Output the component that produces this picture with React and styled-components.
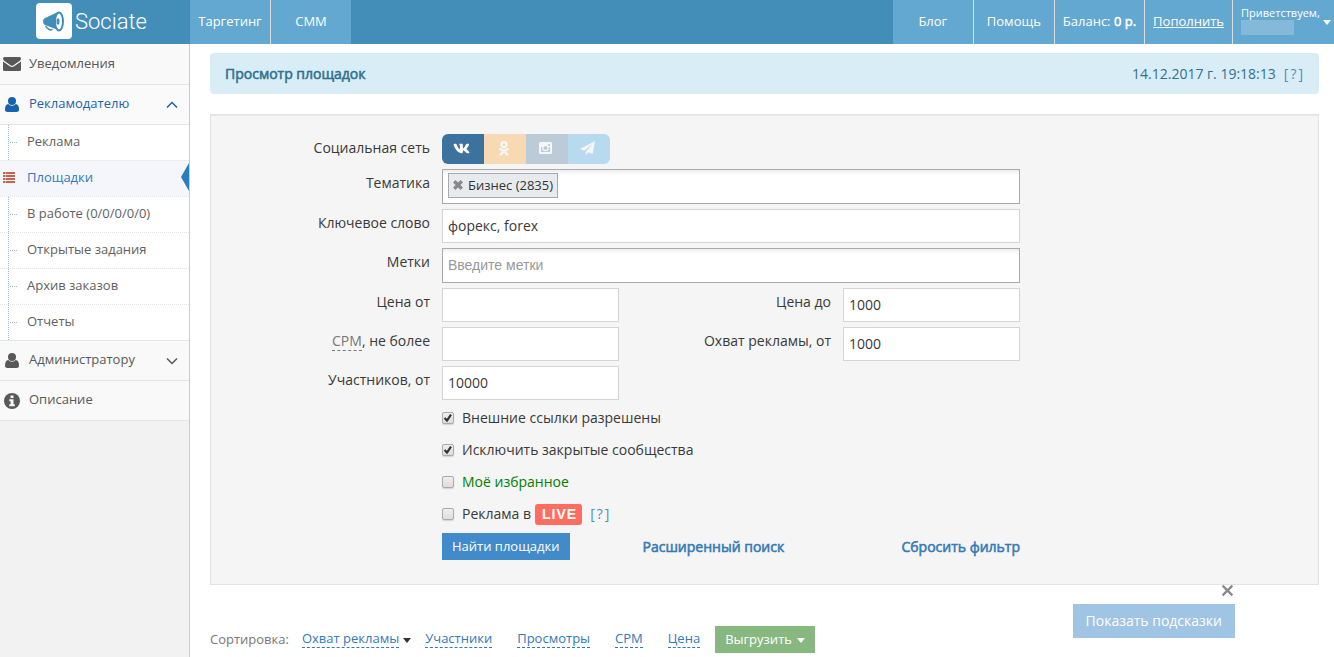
import React from 'react';

import styled, { createGlobalStyle, css } from 'styled-components';

import { FaVk } from 'react-icons/fa';

const GlobalStyle = createGlobalStyle`
	* {
		box-sizing: border-box;
	}
	html {
		height: 100%;
		overflow: hidden;
	}
	body, #root {
		height: 100%;
		margin: 0;
	}
	body {
		font-family: 'Open Sans', 'Noto Sans', sans-serif;
		font-size: 13px;
		line-height: 20px;
		color: #393939;
		background: #fff;
	}
	input, button {
		font-family: inherit;
	}
	a {
		color: #337ab7;
		text-decoration: none;
	}
`;

// thickened regular weight, keeps the regular widths
const strong = css`
	font-weight: 400;
	-webkit-text-stroke: 0.04em currentColor;
`;

const Page = styled.div`
	display: flex;
	flex-direction: column;
	min-height: 100%;
`;

const Navbar = styled.header`
	display: flex;
	height: 44px;
	background: #438eb9;
`;

const Brand = styled.a`
	display: flex;
	align-items: center;
	gap: 3px;
	width: 190px;
	padding: 0 0 3px 36px;
	color: #fff;
	font-family: Roboto, 'Open Sans', sans-serif;
	font-size: 22px;
	font-weight: 300;
`;

const BrandName = styled.span`
	padding-top: 3px;
`;

const NavGroup = styled.nav`
	display: flex;
	margin-left: ${(props) => (props.$right ? 'auto' : 0)};
`;

const NavLink = styled.a`
	display: flex;
	align-items: center;
	justify-content: center;
	min-width: 80px;
	padding: 0 8px 2px;
	color: #fff;
	background: #62a8d1;
	white-space: pre;
	text-decoration: ${(props) => (props.$underline ? 'underline' : 'none')};
	& + & {
		min-width: 81px;
		border-left: 1px solid #ddd;
	}
`;

const Balance = styled.b`
	${strong}
`;

const UserButton = styled.button`
	display: flex;
	align-items: center;
	gap: 3px;
	width: 102px;
	padding: 0 3px 3px 8px;
	border: 0;
	border-left: 1px solid #ddd;
	color: #fff;
	background: #62a8d1;
	font-size: 11px;
	line-height: 14px;
	text-align: left;
`;

const UserName = styled.span`
	display: block;
	width: 53px;
	height: 15px;
	background: #85b9da;
`;

const Caret = styled.span`
	flex: none;
	display: inline-block;
	margin-top: 3px;
	border: 4px solid transparent;
	border-top: 5px solid ${(props) => props.$color || '#fff'};
	border-bottom: 0;
`;

const Body = styled.div`
	display: flex;
	flex: 1;
`;

const Sidebar = styled.aside`
	flex: none;
	width: 190px;
	border-right: 1px solid #ccc;
	background: #f2f2f2;
`;

const Menu = styled.ul`
	margin: 0;
	padding: 0;
	list-style: none;
`;

const MenuItem = styled.li`
	border-bottom: 1px solid #e5e5e5;
`;

const MenuLink = styled.a`
	display: flex;
	align-items: center;
	height: ${(props) => (props.$first ? 40 : 39)}px;
	padding: 0 11px 0 3px;
	color: ${(props) => (props.$open ? '#1963aa' : '#585858')};
	background: ${(props) => (props.$open ? '#fafafa' : '#f9f9f9')};
`;

const MenuIcon = styled.span`
	display: flex;
	flex: none;
	justify-content: center;
	width: 18px;
	height: 16px;
	margin-right: 8px;
	align-items: center;
`;

const MenuText = styled.span`
	flex: 1;
	padding-bottom: 3px;
`;

const Submenu = styled.ul`
	position: relative;
	margin: 0;
	padding: 0;
	list-style: none;
	border-top: 1px solid #e5e5e5;
	background: #fff;
	&::before {
		content: '';
		position: absolute;
		top: 0;
		bottom: 0;
		left: 8px;
		border-left: 1px dotted #9dbdd6;
	}
`;

const SubLink = styled.a`
	position: relative;
	display: flex;
	align-items: center;
	height: ${(props) => (props.$first ? 35 : 36)}px;
	padding: 0 0 3px 27px;
	border-top: ${(props) => (props.$first ? '0' : '1px dotted #e4e4e4')};
	color: ${(props) => (props.$active ? '#337ab7' : '#616161')};
	background: ${(props) => (props.$active ? '#f4f6fb' : 'transparent')};
	${(props) => !props.$active && css`
		&::before {
			content: '';
			position: absolute;
			top: 17px;
			left: 10px;
			width: 7px;
			border-top: 1px dotted #9dbdd6;
		}
	`}
	${(props) => props.$active && css`
		&::after {
			content: '';
			position: absolute;
			top: 2px;
			right: 0;
			border: 14px solid transparent;
			border-right: 8px solid #2b7dbc;
			border-left: 0;
		}
	`}
`;

const ListMark = styled.svg`
	position: absolute;
	top: 11px;
	left: 3px;
	z-index: 1;
`;

const Content = styled.main`
	flex: 1;
	min-width: 0;
	padding: 9px 15px 0 20px;
`;

const TitleBar = styled.div`
	display: flex;
	align-items: center;
	justify-content: space-between;
	height: 41px;
	padding: 0 14px 0 15px;
	border-radius: 4px;
	color: #31708f;
	background: #d9edf7;
	font-size: 14px;
`;

const Title = styled.h1`
	margin: 0;
	font-size: 14px;
	${strong}
`;

const Help = styled.a`
	margin-left: 8px;
	color: #4c8fbd;
	letter-spacing: 2px;
`;

const Filter = styled.form`
	margin-top: 20px;
	padding: 19px 20px 24px;
	border: 1px solid #e3e3e3;
	background: #f5f5f5;
	box-shadow: inset 0 1px 1px rgba(0, 0, 0, 0.05);
	font-size: 14px;
`;

const Fields = styled.div`
	display: grid;
	grid-template-columns: 199px 177px 200px 177px;
	column-gap: 12px;
	row-gap: 5px;
`;

const Label = styled.label`
	padding-top: 4px;
	text-align: right;
`;

const Wide = styled.div`
	grid-column: 2 / -1;
`;

const Networks = styled.div`
	display: flex;
	width: 168px;
	height: 30px;
	border-radius: 6px;
	overflow: hidden;
`;

const NetworkButton = styled.button`
	display: flex;
	flex: 1;
	align-items: center;
	justify-content: center;
	padding: 0 3px 2px 0;
	border: 0;
	color: ${(props) => (props.$active ? '#fff' : '#f6f6f6')};
	background: ${(props) => props.$color};
`;

const Input = styled.input`
	display: block;
	width: 100%;
	height: 34px;
	padding: 0 5px 2px;
	border: 1px solid #d5d5d5;
	border-radius: 0;
	color: #393939;
	background: #fff;
	font-size: 14px;
`;

const TagBox = styled.div`
	display: flex;
	align-items: center;
	height: 35px;
	padding: 0 5px 2px;
	border: 1px solid #aaa;
	background: linear-gradient(#eee 1%, #fff 15%);
`;

const TagInput = styled.input`
	flex: 1;
	min-width: 0;
	padding: 0;
	border: 0;
	outline: 0;
	background: transparent;
	font-size: 14px;
	&::placeholder {
		color: #999;
		font-family: 'Liberation Sans', Arial, sans-serif;
		opacity: 1;
	}
`;

const Tag = styled.span`
	display: flex;
	align-items: center;
	height: 25px;
	padding: 0 4px 2px 0;
	border: 1px solid #aaa;
	color: #333;
	background: #e7ebee;
	font-size: 13px;
`;

const TagRemove = styled.button`
	display: flex;
	width: 19px;
	padding: 0 4px;
	border: 0;
	background: none;
`;

const Abbr = styled.abbr`
	border-bottom: 1px dashed #777;
	color: #777;
	text-decoration: none;
`;

const Checks = styled.div`
	display: flex;
	flex-direction: column;
	padding: 2px 0 3px 211px;
`;

const CheckRow = styled.div`
	display: flex;
	align-items: center;
	height: 32px;
	color: ${(props) => (props.$green ? '#008000' : 'inherit')};
`;

const CheckLabel = styled.label`
	display: flex;
	align-items: center;
	gap: 8px;
`;

const Checkbox = styled.input`
	appearance: none;
	width: 12px;
	height: 12px;
	margin: 0;
	border: 1px solid #aaa;
	border-radius: 2px;
	background: linear-gradient(#eee, #ddd);
	box-shadow: 0 1px 1px rgba(0, 0, 0, 0.15);
	&:checked {
		background: url("data:image/svg+xml,%3Csvg xmlns='http://www.w3.org/2000/svg' viewBox='0 0 10 10'%3E%3Cpath d='M1.6 5l2.4 2.6 4-6' fill='none' stroke='%23333' stroke-width='2.2'/%3E%3C/svg%3E"), linear-gradient(#eee, #ddd);
	}
`;

const Live = styled.span`
	margin-left: 4px;
	padding: 0 5px 0 7px;
	border-radius: 3px;
	color: #fff;
	background: #ff6c60;
	font-family: 'Liberation Sans', Arial, sans-serif;
	font-weight: 700;
	line-height: 21px;
	letter-spacing: 1px;
`;

const Actions = styled.div`
	display: flex;
	align-items: center;
	width: 578px;
	margin-left: 211px;
`;

const Button = styled.button`
	display: flex;
	align-items: center;
	gap: 5px;
	height: 27px;
	padding: 0 10px 2px;
	border: 0;
	color: #fff;
	background: ${(props) => props.$color};
	font-size: 13px;
`;

const BoldLink = styled.a`
	margin-left: ${(props) => (props.$end ? 'auto' : '73px')};
	${strong}
`;

const SortBar = styled.div`
	display: flex;
	align-items: center;
	gap: 25px;
	margin-top: 41px;
	color: #777;
`;

const SortFirst = styled.span`
	display: flex;
	align-items: center;
	gap: 13px;
	margin-right: -11px;
	padding-bottom: 2px;
`;

const SortLink = styled.a`
	margin-bottom: ${(props) => (props.$inner ? 0 : 2)}px;
	border-bottom: 1px dashed #337ab7;
	line-height: 18px;
`;

const SortActive = styled.span`
	display: flex;
	align-items: center;
	gap: 4px;
`;

const Export = styled.div`
	margin-left: -10px;
`;

const Hints = styled.div`
	position: fixed;
	right: 99px;
	bottom: 19px;
	display: flex;
	flex-direction: column;
	align-items: flex-end;
	gap: 7px;
`;

const CloseButton = styled.button`
	display: flex;
	padding: 0 1px;
	border: 0;
	background: none;
`;

const HintsButton = styled.button`
	height: 34px;
	padding: 0 13px 2px;
	border: 0;
	color: #fff;
	background: #a0c4e4;
	font-size: 14px;
`;

const Logo = () => (
	<svg width="36" height="36" viewBox="0 0 36 36">
		<rect width="36" height="36" rx="4" fill="#fff" />
		<path d="M7 18q0-2 2-3l13-6v18L9 22Q7 21 7 18z" fill="#438eb9" />
		<path d="M9.500 23q2 3.500 5.500 4l1.500-1" fill="none" stroke="#438eb9" strokeWidth="1.500" />
		<ellipse cx="23" cy="18.500" rx="4" ry="9" fill="#fff" stroke="#438eb9" strokeWidth="2" />
		<ellipse cx="22" cy="18.500" rx="1.500" ry="3.300" fill="#438eb9" />
	</svg>
);

const EnvelopeIcon = () => (
	<svg width="18" height="14" viewBox="0 0 18 14" fill="currentColor">
		<path d="M0 1.500Q0 0 1.500 0h15Q18 0 18 1.500 18 3 16.500 4l-6 4.200q-1.500 1-3 0L1.500 4Q0 3 0 1.500z" />
		<path d="M0 4.500l6.800 4.800q2.200 1.500 4.400 0L18 4.500v8q0 1.500-1.500 1.500h-15Q0 14 0 12.500z" />
	</svg>
);

const UserIcon = () => (
	<svg width="14" height="15" viewBox="0 0 14 15" fill="currentColor">
		<circle cx="7" cy="4" r="4" />
		<path d="M3.300 7q1.500 1.800 3.700 1.800T10.700 7Q14 7.200 14 12.500 14 15 11.500 15h-9Q0 15 0 12.500 0 7.200 3.300 7z" />
	</svg>
);

const InfoIcon = () => (
	<svg width="16" height="16" viewBox="0 0 16 16">
		<circle cx="8" cy="8" r="8" fill="currentColor" />
		<path d="M6.500 2.500h3V5h-3zM5.300 6.300h4.200v5h1.300v2H5.300v-2h1.300v-3H5.300z" fill="#f9f9f9" />
	</svg>
);

const OkIcon = () => (
	<svg width="10" height="15" viewBox="0 0 10 15" fill="none" stroke="currentColor" strokeWidth="2.200">
		<circle cx="5" cy="3.700" r="2.600" />
		<path d="M1.200 8.200q3.800 2.600 7.600 0M5 9.500l-3.300 4.200M5 9.500l3.300 4.200" strokeLinecap="round" />
	</svg>
);

const PlaneIcon = () => (
	<svg width="15" height="15" viewBox="0 0 15 15" fill="currentColor">
		<path d="M15 0L12.700 13 8.300 11.200 5.800 14.500V10.700L13 2.500 4.200 9.700 0 8z" />
	</svg>
);

const InstagramIcon = () => (
	<svg width="13" height="12" viewBox="0 0 13 12">
		<rect width="13" height="12" rx="1.500" fill="currentColor" />
		<path d="M2 5v5h9V5M9 2h2v2H9z" fill="#bccbd8" />
		<circle cx="6.500" cy="6" r="3.300" fill="currentColor" />
		<circle cx="6.500" cy="6" r="2" fill="#bccbd8" />
	</svg>
);

const Arrow = ({ up }) => (
	<svg width="12" height="8" viewBox="0 0 12 8">
		<path d={up ? 'M1 6.500l5-5 5 5' : 'M1 1.500l5 5 5-5'} fill="none" stroke="currentColor" strokeWidth="1.500" />
	</svg>
);

const Cross = ({ size, width }) => (
	<svg width={size} height={size} viewBox="0 0 12 12">
		<path d="M1.500 1.500l9 9M10.500 1.500l-9 9" stroke="#888" strokeWidth={width} />
	</svg>
);

const submenu = ['Реклама', 'Площадки', 'В работе (0/0/0/0/0)', 'Открытые задания', 'Архив заказов', 'Отчеты'];

const networks = [
	{ name: 'ВКонтакте', color: '#3d729f', icon: <FaVk size={17} />, active: true },
	{ name: 'Одноклассники', color: '#f7dab3', icon: <OkIcon /> },
	{ name: 'Instagram', color: '#bccbd8', icon: <InstagramIcon /> },
	{ name: 'Telegram', color: '#b8daee', icon: <PlaneIcon /> },
];

const SideMenu = () => (
	<Sidebar>
		<Menu>
			<MenuItem>
				<MenuLink href="#" $first><MenuIcon><EnvelopeIcon /></MenuIcon><MenuText>Уведомления</MenuText></MenuLink>
			</MenuItem>
			<MenuItem>
				<MenuLink href="#" $open><MenuIcon><UserIcon /></MenuIcon><MenuText>Рекламодателю</MenuText><Arrow up /></MenuLink>
				<Submenu>
					{submenu.map((name, i) => (
						<li key={name}>
							<SubLink href="#" $first={i === 0} $active={i === 1}>
								{i === 1 && (
									<ListMark width="12" height="11" viewBox="0 0 12 11">
										<path d="M0 1h12M0 4h12M0 7h12M0 10h12" stroke="#c86150" strokeWidth="2" />
										<path d="M2.500 0v11" stroke="#f4f6fb" strokeWidth="0.500" />
									</ListMark>
								)}
								{name}
							</SubLink>
						</li>
					))}
				</Submenu>
			</MenuItem>
			<MenuItem>
				<MenuLink href="#"><MenuIcon><UserIcon /></MenuIcon><MenuText>Администратору</MenuText><Arrow /></MenuLink>
			</MenuItem>
			<MenuItem>
				<MenuLink href="#"><MenuIcon><InfoIcon /></MenuIcon><MenuText>Описание</MenuText></MenuLink>
			</MenuItem>
		</Menu>
	</Sidebar>
);

const FilterForm = () => (
	<Filter onSubmit={(e) => e.preventDefault()}>
		<Fields>
			<Label as="span">Социальная сеть</Label>
			<Wide>
				<Networks>
					{networks.map((n) => (
						<NetworkButton key={n.name} type="button" aria-label={n.name} $color={n.color} $active={n.active}>{n.icon}</NetworkButton>
					))}
				</Networks>
			</Wide>
			<Label htmlFor="theme">Тематика</Label>
			<Wide>
				<TagBox>
					<Tag><TagRemove type="button" aria-label="Удалить"><Cross size={10} width={4} /></TagRemove>Бизнес (2835)</Tag>
					<TagInput id="theme" />
				</TagBox>
			</Wide>
			<Label htmlFor="keyword">Ключевое слово</Label>
			<Wide><Input id="keyword" defaultValue="форекс, forex" /></Wide>
			<Label htmlFor="marks">Метки</Label>
			<Wide><TagBox><TagInput id="marks" placeholder="Введите метки" /></TagBox></Wide>
			<Label htmlFor="priceFrom">Цена от</Label>
			<Input id="priceFrom" />
			<Label htmlFor="priceTo">Цена до</Label>
			<Input id="priceTo" defaultValue="1000" />
			<Label htmlFor="cpm"><Abbr>CPM</Abbr>, не более</Label>
			<Input id="cpm" />
			<Label htmlFor="reach">Охват рекламы, от</Label>
			<Input id="reach" defaultValue="1000" />
			<Label htmlFor="members">Участников, от</Label>
			<Input id="members" defaultValue="10000" />
		</Fields>
		<Checks>
			<CheckRow><CheckLabel><Checkbox type="checkbox" defaultChecked />Внешние ссылки разрешены</CheckLabel></CheckRow>
			<CheckRow><CheckLabel><Checkbox type="checkbox" defaultChecked />Исключить закрытые сообщества</CheckLabel></CheckRow>
			<CheckRow $green><CheckLabel><Checkbox type="checkbox" />Моё избранное</CheckLabel></CheckRow>
			<CheckRow>
				<CheckLabel><Checkbox type="checkbox" /><span>Реклама в</span></CheckLabel>
				<Live>LIVE</Live>
				<Help href="#">[?]</Help>
			</CheckRow>
		</Checks>
		<Actions>
			<Button type="submit" $color="#428bca">Найти площадки</Button>
			<BoldLink href="#">Расширенный поиск</BoldLink>
			<BoldLink href="#" $end>Сбросить фильтр</BoldLink>
		</Actions>
	</Filter>
);

const App = () => (
	<Page>
		<GlobalStyle />
		<Navbar>
			<Brand href="#"><Logo /><BrandName>Sociate</BrandName></Brand>
			<NavGroup>
				<NavLink href="#">Таргетинг</NavLink>
				<NavLink href="#">СММ</NavLink>
			</NavGroup>
			<NavGroup $right>
				<NavLink href="#">Блог</NavLink>
				<NavLink href="#">Помощь</NavLink>
				<NavLink href="#">Баланс: <Balance>0 р.</Balance></NavLink>
				<NavLink href="#" $underline>Пополнить</NavLink>
				<UserButton type="button"><span>Приветствуем,<UserName /></span><Caret /></UserButton>
			</NavGroup>
		</Navbar>
		<Body>
			<SideMenu />
			<Content>
				<TitleBar>
					<Title>Просмотр площадок</Title>
					<span>14.12.2017 г. 19:18:13<Help href="#">[?]</Help></span>
				</TitleBar>
				<FilterForm />
				<SortBar>
					<SortFirst>
						Сортировка:
						<SortActive><SortLink href="#" $inner>Охват рекламы</SortLink><Caret $color="#333" /></SortActive>
					</SortFirst>
					<SortLink href="#">Участники</SortLink>
					<SortLink href="#">Просмотры</SortLink>
					<SortLink href="#">CPM</SortLink>
					<SortLink href="#">Цена</SortLink>
					<Export><Button type="button" $color="#87b87f">Выгрузить <Caret /></Button></Export>
				</SortBar>
			</Content>
		</Body>
		<Hints>
			<CloseButton type="button" aria-label="Закрыть"><Cross size={13} width={2} /></CloseButton>
			<HintsButton type="button">Показать подсказки</HintsButton>
		</Hints>
	</Page>
);

export default App;
